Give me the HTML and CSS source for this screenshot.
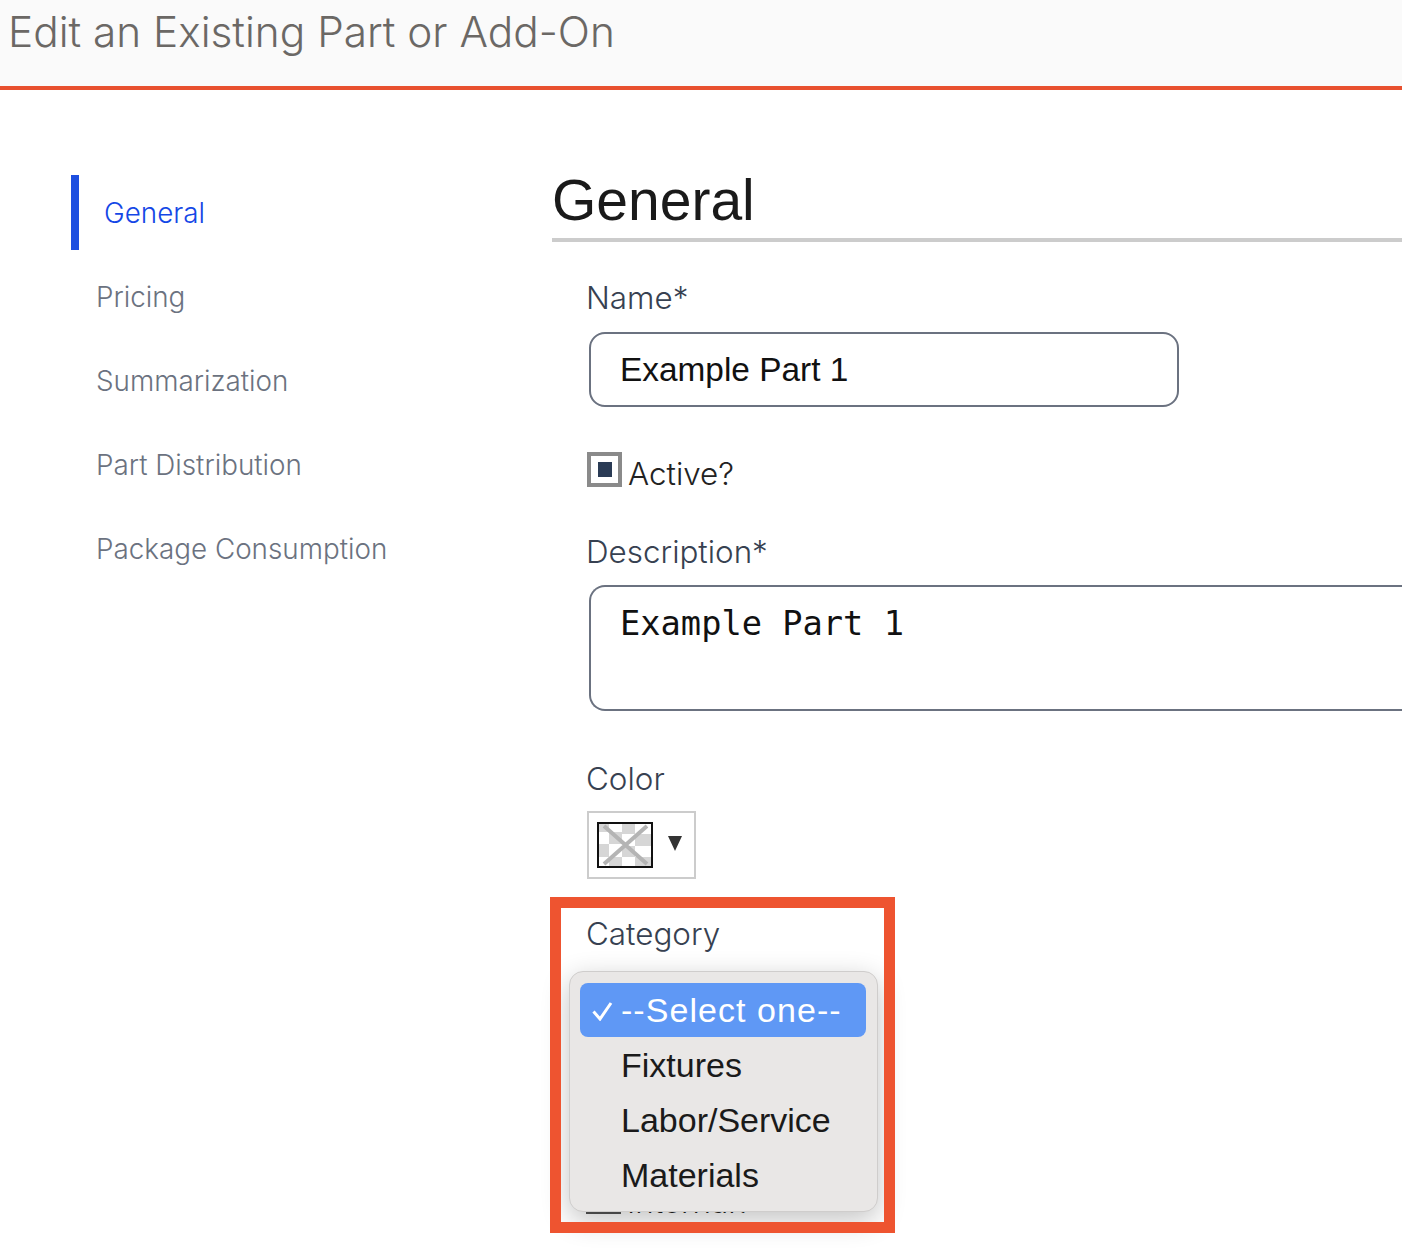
FILE: index.html

```html
<!DOCTYPE html>
<html lang="en">
<head>
	<meta charset="UTF-8">
	<meta name="viewport" content="width=device-width, initial-scale=1.0">
	<title>Edit an Existing Part or Add-On</title>
	<link rel="stylesheet" href="styles.css">
</head>
<body>

<header class="page-header">
	<h1>Edit an Existing Part or Add-On</h1>
</header>

<div class="page-body">
	<nav class="side-nav">
		<a class="nav-item active" href="#">General</a>
		<a class="nav-item" href="#">Pricing</a>
		<a class="nav-item" href="#">Summarization</a>
		<a class="nav-item" href="#">Part Distribution</a>
		<a class="nav-item" href="#">Package Consumption</a>
	</nav>

	<main class="content">
		<h2>General</h2>
		<div class="form-area">
			<label class="field-label" for="partName">Name*</label>
			<input class="text-input" type="text" id="partName" value="Example Part 1">

			<div class="check-row">
				<span class="check-box"><span class="check-mark"></span></span>
				<span>Active?</span>
			</div>

			<label class="field-label" for="partDesc">Description*</label>
			<textarea class="text-area" id="partDesc">Example Part 1</textarea>

			<div class="field-label color-label">Color</div>
			<div class="color-picker">
				<svg class="swatch" width="56" height="46" viewBox="0 0 56 46">
					<rect width="56" height="46" fill="#fff"/>
					<g fill="#d6d6d6">
						<rect x="2" y="2" width="10" height="8"/>
						<rect x="25" y="2" width="13" height="10"/>
						<rect x="12" y="10" width="13" height="12"/>
						<rect x="38" y="12" width="16" height="12"/>
						<rect x="2" y="22" width="10" height="13"/>
						<rect x="25" y="24" width="13" height="11"/>
						<rect x="12" y="35" width="13" height="9"/>
						<rect x="38" y="35" width="16" height="9"/>
					</g>
					<path d="M7 4 L50 42 M50 4 L7 42" stroke="#b4b4b4" stroke-width="4" fill="none"/>
					<rect x="1" y="1" width="54" height="44" fill="none" stroke="#111" stroke-width="2"/>
				</svg>
				<span class="picker-arrow"></span>
			</div>

			<div class="category-field">
				<div class="field-label">Category</div>
				<ul class="select-menu">
					<li class="select-option selected">
						<svg class="tick" width="22" height="20" viewBox="0 0 22 20">
							<path d="M2.5 10.5 L9 18 L20 2" stroke="#fff" stroke-width="3" fill="none"/>
						</svg>
						--Select one--
					</li>
					<li class="select-option">Fixtures</li>
					<li class="select-option">Labor/Service</li>
					<li class="select-option">Materials</li>
				</ul>
			</div>

			<div class="check-row under-menu">
				<span class="check-box"></span>
				<span>Internal?</span>
			</div>

			<div class="highlight-box"></div>
		</div>
	</main>
</div>

</body>
</html>
```

FILE: styles.css

```css
html, body {
	margin: 0;
	height: 100%;
	overflow: hidden;
	background: #fff;
}
body {
	font-family: Inter, "Liberation Sans", Arial, sans-serif;
	color: #374151;
}
.page-header {
	height: 86px;
	background-color: #fafafa;
	border-bottom: 4px solid #e8502f;
}
.page-header h1 {
	margin: 0;
	padding: 7px 0 0 8px;
	font-size: 42.3px;
	line-height: 50px;
	font-weight: 300;
	color: #6b6865;
}
.page-body {
	display: flex;
	padding: 85px 0 0 71px;
}
.side-nav {
	width: 481px;
	flex-shrink: 0;
	display: flex;
	flex-direction: column;
}
.nav-item {
	height: 84px;
	display: flex;
	align-items: center;
	padding-left: 25px;
	font-size: 27.8px;
	font-weight: 300;
	color: #6b7280;
	text-decoration: none;
}
.nav-item.active {
	height: 75px;
	margin-bottom: 5px;
	padding-left: 25px;
	border-left: 8px solid #1d4fe0;
	color: #1447e6;
}
.content {
	flex: 1;
	min-width: 0;
}
.content h2 {
	margin: 0;
	height: 63px;
	border-bottom: 4px solid #ccc;
	font-family: "Liberation Sans", Arial, sans-serif;
	font-size: 57px;
	line-height: 51px;
	font-weight: 400;
	color: #1a1a1a;
}
.form-area {
	position: relative;
	padding: 36px 0 0 34px;
}
.field-label {
	display: block;
	font-size: 31.4px;
	line-height: 40px;
	font-weight: 300;
	color: #374151;
}
.text-input {
	display: block;
	box-sizing: border-box;
	width: 590px;
	height: 75px;
	margin: 14px 0 0 3px;
	padding: 0 29px;
	border: 2px solid #6b7280;
	border-radius: 16px;
	font-family: "Liberation Sans", Arial, sans-serif;
	font-size: 33.4px;
	color: #111;
	background: #fff;
}
.check-row {
	display: flex;
	align-items: flex-start;
	gap: 6px;
	margin-top: 45px;
	height: 40px;
	font-size: 31.4px;
	line-height: 44px;
	font-weight: 300;
	color: #222;
}
.check-box {
	box-sizing: border-box;
	width: 35px;
	height: 35px;
	margin-left: 1px;
	border: 4px solid #8a8a8a;
	display: flex;
	align-items: center;
	justify-content: center;
}
.check-mark {
	width: 14px;
	height: 15px;
	background-color: #2a3b55;
}
.check-row + .field-label {
	margin-top: 40px;
}
.under-menu {
	margin-top: 225px;
	line-height: 46px;
}
.under-menu .check-box {
	margin-left: 0;
	border-color: #555;
}
.text-area {
	display: block;
	box-sizing: border-box;
	width: 813px;
	height: 126px;
	margin: 13px 0 0 3px;
	padding: 17px 0 0 29px;
	border: 2px solid #6b7280;
	border-right: none;
	border-radius: 16px 0 0 16px;
	font-family: "DejaVu Sans Mono", "Liberation Mono", monospace;
	font-size: 33.7px;
	line-height: 40px;
	color: #111;
	background: #fff;
	resize: none;
	overflow: hidden;
}
.color-label {
	margin-top: 48px;
}
.color-picker {
	box-sizing: border-box;
	width: 109px;
	height: 68px;
	margin: 12px 0 0 1px;
	border: 2px solid #ccc;
	display: flex;
	align-items: flex-start;
	padding: 9px 0 0 8px;
}
.swatch {
	display: block;
}
.picker-arrow {
	width: 0;
	height: 0;
	margin: 14px 0 0 15px;
	border-left: 7px solid transparent;
	border-right: 7px solid transparent;
	border-top: 15px solid #333;
}
.category-field {
	position: relative;
	margin-top: 35px;
}
.select-menu {
	position: absolute;
	top: 57px;
	left: -17px;
	box-sizing: border-box;
	width: 309px;
	height: 241px;
	margin: 0;
	padding: 11px 11px 11px 10px;
	list-style: none;
	background-color: #e9e7e6;
	border: 1px solid #cfcdcc;
	border-radius: 14px;
	box-shadow: 0 8px 28px rgba(0, 0, 0, 0.24);
	font-family: "Liberation Sans", Arial, sans-serif;
	font-size: 34px;
	color: #1a1a1a;
}
.select-option {
	position: relative;
	height: 55px;
	line-height: 55px;
	padding-left: 41px;
	border-radius: 8px;
	white-space: nowrap;
}
.select-option.selected {
	height: 54px;
	line-height: 54px;
	margin-bottom: 1px;
	background-color: #5f98f5;
	color: #fff;
	letter-spacing: 1.05px;
}
.tick {
	position: absolute;
	left: 11px;
	top: 18px;
}
.highlight-box {
	position: absolute;
	top: 655px;
	left: -2px;
	box-sizing: border-box;
	width: 345px;
	height: 336px;
	border: 11px solid #ee5430;
	pointer-events: none;
}
```
